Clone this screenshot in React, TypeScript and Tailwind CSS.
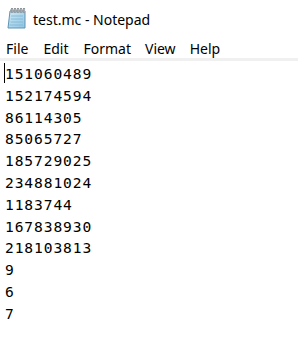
import React from "react";

const lines = [
  "151060489",
  "152174594",
  "86114305",
  "85065727",
  "185729025",
  "234881024",
  "1183744",
  "167838930",
  "218103813",
  "9",
  "6",
  "7",
];

function NotepadIcon() {
  return (
    <svg width="20" height="22" viewBox="0 0 20 22">
      <defs>
        <linearGradient id="pad" x1="0" y1="0" x2="1" y2="1">
          <stop offset="0" stopColor="#cfe9f7" />
          <stop offset="1" stopColor="#8ec5e3" />
        </linearGradient>
      </defs>
      <path d="M3 3 H18 V20 H1 Z" fill="url(#pad)" stroke="#5f93b3" strokeWidth="1" />
      <line x1="4" y1="8" x2="16" y2="8" stroke="#7fb2d0" strokeWidth="0.8" />
      <line x1="4" y1="11" x2="16" y2="11" stroke="#7fb2d0" strokeWidth="0.8" />
      <line x1="3.5" y1="14" x2="16" y2="14" stroke="#7fb2d0" strokeWidth="0.8" />
      <line x1="2.5" y1="17" x2="16" y2="17" stroke="#7fb2d0" strokeWidth="0.8" />
      <rect x="3" y="1.5" width="15" height="3" fill="#9aa4ab" />
      {[5, 8, 11, 14, 17].map((x) => (
        <rect key={x} x={x - 0.6} y="0.5" width="1.4" height="4" fill="#dfe4e8" stroke="#6b757c" strokeWidth="0.5" />
      ))}
    </svg>
  );
}

export default function App() {
  return (
    <div className="w-[298px] h-[346px] bg-white overflow-hidden flex flex-col" style={{ fontFamily: '"Segoe UI", "Noto Sans", sans-serif' }}>
      <div className="h-[38px] flex items-center pl-[7px] gap-[6px]">
        <NotepadIcon />
        <span className="text-[14px] text-black">test.mc - Notepad</span>
      </div>
      <div className="h-[20px] flex items-center text-[14px] text-black">
        <span className="ml-[6px]">File</span>
        <span className="ml-[15px]">Edit</span>
        <span className="ml-[15px]">Format</span>
        <span className="ml-[14px]">View</span>
        <span className="ml-[14px]">Help</span>
      </div>
      <div className="h-[3px] bg-[#f0f0f0]" />
      <div className="relative pl-[5px] pt-[2px] text-[14.6px] leading-[21.8px] tracking-[0.9px] text-black" style={{ fontFamily: '"DejaVu Sans Mono", monospace' }}>
        <div className="absolute left-[4px] top-[2px] w-[1px] h-[20px] bg-black" />
        {lines.map((l, i) => (
          <div key={i}>{l}</div>
        ))}
      </div>
    </div>
  );
}
